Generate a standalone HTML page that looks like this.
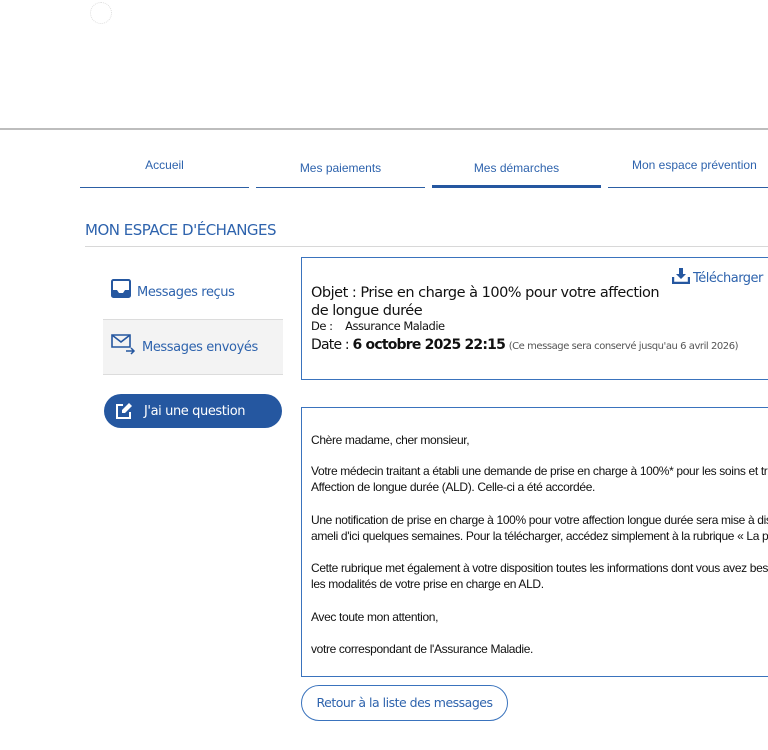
<!DOCTYPE html>
<html><head><meta charset="utf-8"><style>
*{margin:0;padding:0;box-sizing:border-box}
html,body{width:768px;height:750px;overflow:hidden}
body{background:#fff;position:relative;font-family:"Liberation Sans",Arial,sans-serif}
.a{position:absolute;white-space:nowrap}
.tab{position:absolute;top:140px;height:48px;border-bottom:1.5px solid #2c5fa4;color:#2e63ad;font-size:12px;text-align:center}
.box{position:absolute;border:1.5px solid #3a73bd;border-right:none;background:#fff;overflow:hidden}
.op{font-family:"DejaVu Sans","Liberation Sans",sans-serif;letter-spacing:-0.4px}
.body p{position:absolute;left:9px;font-size:12px;letter-spacing:-0.35px;color:#111;white-space:nowrap}
</style></head><body>
<div class="a" style="left:90px;top:2px;width:22px;height:22px;border:1px dotted #ddd;border-radius:50%"></div>
<div class="a" style="left:-3px;top:64px;color:#2e63ad;font-size:14px">i</div>
<div class="a" style="left:0;top:128px;width:768px;height:2px;background:#bdbdbd"></div>

<div class="tab" style="left:80px;width:169px"><div style="margin-top:18px">Accueil</div></div>
<div class="tab" style="left:256px;width:169px"><div style="margin-top:21px">Mes paiements</div></div>
<div class="tab" style="left:432px;width:169px;border-bottom:3.5px solid #2557a0"><div style="margin-top:21px">Mes démarches</div></div>
<div class="tab" style="left:608px;width:160px;text-align:left"><div style="margin-top:18px;margin-left:24px">Mon espace prévention</div></div>

<div class="a op" style="left:85px;top:221px;font-size:15px;color:#2e63ad;letter-spacing:-0.5px">MON ESPACE D'ÉCHANGES</div>
<div class="a" style="left:85px;top:246px;width:683px;height:1px;background:#d8d8d8"></div>

<svg class="a" style="left:111px;top:279px" width="20" height="19" viewBox="0 0 20 19"><rect x="1" y="1" width="18" height="17" rx="1.5" fill="none" stroke="#2557a0" stroke-width="2"/><path d="M1 11h5l2 3h4l2-3h5v7H1z" fill="#2557a0"/></svg>
<div class="a op" style="left:137px;top:285px;font-size:13px;color:#2e63ad">Messages reçus</div>
<div class="a" style="left:103px;top:319px;width:180px;height:56px;background:#f3f3f3;border-top:1px solid #dcdcdc;border-bottom:1px solid #dcdcdc"></div>
<svg class="a" style="left:110px;top:333px" width="26" height="22" viewBox="0 0 26 22"><path d="M2 2h18v12H2z" fill="none" stroke="#2557a0" stroke-width="1.6"/><path d="M2 2l9 7 9-7" fill="none" stroke="#2557a0" stroke-width="1.6"/><path d="M16 18h8m-3-3l3 3-3 3" fill="none" stroke="#2557a0" stroke-width="1.5"/></svg>
<div class="a op" style="left:142px;top:340px;font-size:13px;color:#2e63ad">Messages envoyés</div>

<div class="a" style="left:104px;top:394px;width:178px;height:34px;border-radius:17px;background:#2557a0"></div>
<svg class="a" style="left:115px;top:402px" width="18" height="18" viewBox="0 0 18 18"><path d="M8 3H2v13h13V10" fill="none" stroke="#fff" stroke-width="2"/><path d="M14 1l3 3-7 7H7V8z" fill="#fff"/></svg>
<div class="a op" style="left:144px;top:404px;font-size:13px;color:#fff">J'ai une question</div>

<div class="box" style="left:301px;top:257px;width:467px;height:123px"></div>
<svg class="a" style="left:672px;top:267px" width="18" height="17" viewBox="0 0 18 17"><path d="M7 1h4v6h3l-5 5-5-5h3z" fill="#2557a0"/><path d="M1 10v6h16v-6" fill="none" stroke="#2557a0" stroke-width="2.4"/></svg>
<div class="a op" style="left:693px;top:271px;font-size:13px;color:#2e63ad;letter-spacing:-0.5px">Télécharger</div>
<div class="a op" style="left:311px;top:284px;font-size:14.5px;color:#111;line-height:18px;letter-spacing:-0.5px">Objet : Prise en charge à 100% pour votre affection<br>de longue durée</div>
<div class="a op" style="left:311px;top:319px;font-size:11.5px;color:#111;letter-spacing:-0.5px">De :&nbsp;&nbsp;&nbsp; Assurance Maladie</div>
<div class="a op" style="left:311px;top:337px;font-size:14px;color:#111;letter-spacing:-0.8px">Date : <b>6 octobre 2025 22:15</b> <span style="font-size:10px;color:#555;letter-spacing:-0.45px">(Ce message sera conservé jusqu'au 6 avril 2026)</span></div>

<div class="box body" style="left:301px;top:407px;width:467px;height:270px">
<p style="top:25px">Chère madame, cher monsieur,</p>
<p style="top:56px">Votre médecin traitant a établi une demande de prise en charge à 100%* pour les soins et traitements de votre</p>
<p style="top:72px">Affection de longue durée (ALD). Celle-ci a été accordée.</p>
<p style="top:105px">Une notification de prise en charge à 100% pour votre affection longue durée sera mise à disposition sur votre compte</p>
<p style="top:121px">ameli d'ici quelques semaines. Pour la télécharger, accédez simplement à la rubrique « La prise en charge »</p>
<p style="top:153px">Cette rubrique met également à votre disposition toutes les informations dont vous avez besoin pour comprendre</p>
<p style="top:169px">les modalités de votre prise en charge en ALD.</p>
<p style="top:202px">Avec toute mon attention,</p>
<p style="top:234px">votre correspondant de l'Assurance Maladie.</p>
</div>

<div class="a op" style="left:301px;top:685px;width:207px;height:36px;border:1.5px solid #3a73bd;border-radius:18px;font-size:12.5px;color:#2e63ad;text-align:center;line-height:33px;letter-spacing:-0.5px">Retour à la liste des messages</div>
</body></html>
